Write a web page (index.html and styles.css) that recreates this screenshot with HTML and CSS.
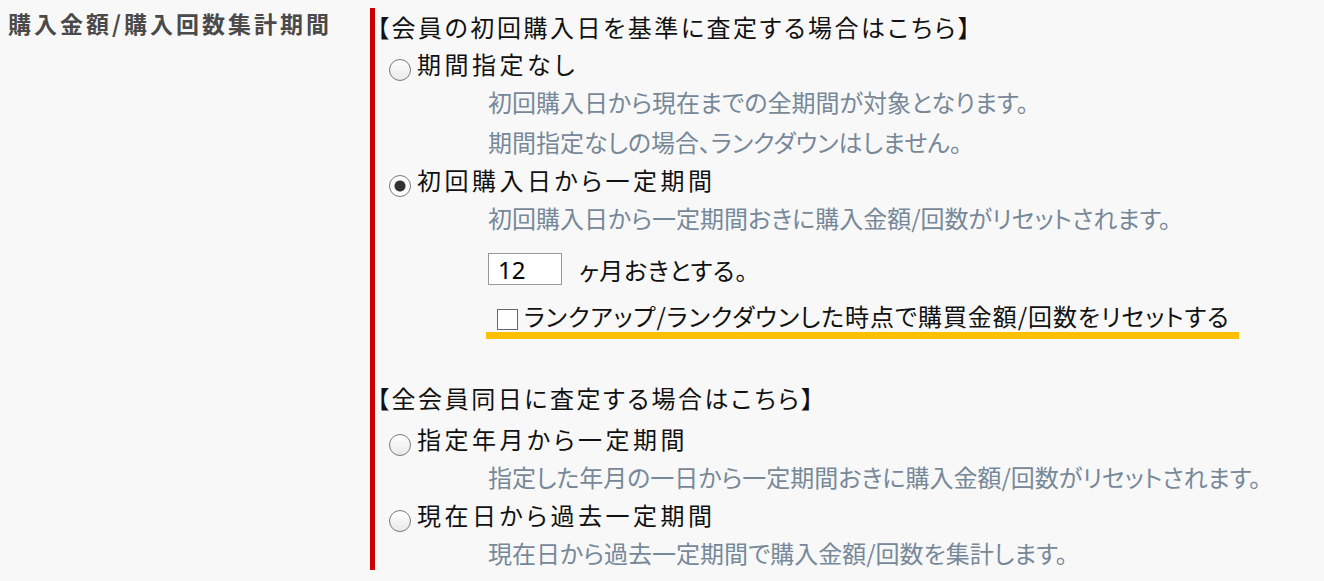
FILE: index.html
```html
<!DOCTYPE html>
<html lang="ja">
<head>
    <meta charset="UTF-8">
    <meta name="viewport" content="width=device-width, initial-scale=1.0">
    <title>購入金額/購入回数集計期間</title>
    <link rel="stylesheet" href="styles.css">
</head>
<body>

    <!-- Setting row -->
    <div class="setting-row">
        <div class="setting-label">購入金額/購入回数集計期間</div>

        <div class="setting-body">
            <!-- Based on first purchase date -->
            <p class="group-title">【会員の初回購入日を基準に査定する場合はこちら】</p>

            <label class="radio-item">
                <input type="radio" name="period" value="none">期間指定なし
            </label>
            <p class="note">初回購入日から現在までの全期間が対象となります。</p>
            <p class="note">期間指定なしの場合、ランクダウンはしません。</p>

            <label class="radio-item">
                <input type="radio" name="period" value="first" checked>初回購入日から一定期間
            </label>
            <p class="note">初回購入日から一定期間おきに購入金額/回数がリセットされます。</p>

            <div class="month-row">
                <input type="text" class="month-input" value="12">
                <span class="month-text">ヶ月おきとする。</span>
            </div>

            <div class="reset-row">
                <label class="reset-check">
                    <input type="checkbox" name="reset">ランクアップ/ランクダウンした時点で購買金額/回数をリセットする
                </label>
            </div>

            <!-- Same day for all members -->
            <p class="group-title second">【全会員同日に査定する場合はこちら】</p>

            <label class="radio-item first-in-group">
                <input type="radio" name="period" value="month">指定年月から一定期間
            </label>
            <p class="note">指定した年月の一日から一定期間おきに購入金額/回数がリセットされます。</p>

            <label class="radio-item">
                <input type="radio" name="period" value="past">現在日から過去一定期間
            </label>
            <p class="note">現在日から過去一定期間で購入金額/回数を集計します。</p>
        </div>
    </div>

</body>
</html>
```

FILE: styles.css
```css
/* General Reset */
body, p, label, input {
    margin: 0;
    padding: 0;
}
body {
    background-color: #f8f8f8;
    font-family: "Noto Sans CJK JP", "Noto Sans", sans-serif;
    color: #111;
    padding: 8px 0 0 8px;
}
.setting-row {
    display: flex;
    align-items: flex-start;
}
.setting-label {
    width: 362px;
    flex-shrink: 0;
    font-size: 23px;
    font-weight: bold;
    line-height: 30px;
    color: #4a4a4a;
    letter-spacing: 3px;
}
.setting-body {
    border-left: 5px solid #cc0000;
    height: 562px;
    overflow: hidden;
    font-feature-settings: "palt";
}
.group-title {
    font-size: 24px;
    line-height: 38px;
    letter-spacing: 2.55px;
    margin-left: 2px;
}
.group-title.second {
    margin-top: 40px;
}
.radio-item {
    display: block;
    font-size: 24px;
    line-height: 36px;
    letter-spacing: 3.5px;
    padding-left: 14px;
}
.radio-item.first-in-group {
    margin-top: 4px;
}
.radio-item input[type="radio"] {
    -webkit-appearance: none;
    appearance: none;
    width: 22px;
    height: 22px;
    border: 1px solid #7a7a7a;
    border-radius: 50%;
    background: linear-gradient(#fff, #e9e9e9);
    margin: 0 6px 0 0;
    vertical-align: -7px;
}
.radio-item input[type="radio"]:checked {
    background: radial-gradient(circle, #333 0, #333 5px, #fff 6px);
}
.note {
    font-size: 24px;
    line-height: 40px;
    color: #778899;
    padding-left: 113px;
}
.month-row {
    display: flex;
    align-items: center;
    margin-top: 15px;
    padding-left: 113px;
    height: 32px;
}
.month-input {
    width: 74px;
    height: 32px;
    box-sizing: border-box;
    border: 1px solid #999;
    background-color: #fff;
    font-family: "Noto Sans", sans-serif;
    font-size: 24px;
    padding: 0 9px;
    color: #000;
}
.month-text {
    font-size: 24px;
    letter-spacing: 0.7px;
    margin-left: 17px;
}
.reset-row {
    margin-top: 15px;
    padding-left: 111px;
}
.reset-check {
    display: inline-block;
    font-size: 24px;
    letter-spacing: 0.93px;
    line-height: 32px;
    padding: 0 9px 0 11px;
    border-bottom: 7px solid #ffc000;
}
.reset-check input[type="checkbox"] {
    -webkit-appearance: none;
    appearance: none;
    width: 21px;
    height: 21px;
    border: 1px solid #666;
    background-color: #fff;
    margin: 0 6px 0 0;
    vertical-align: -4px;
}
```
